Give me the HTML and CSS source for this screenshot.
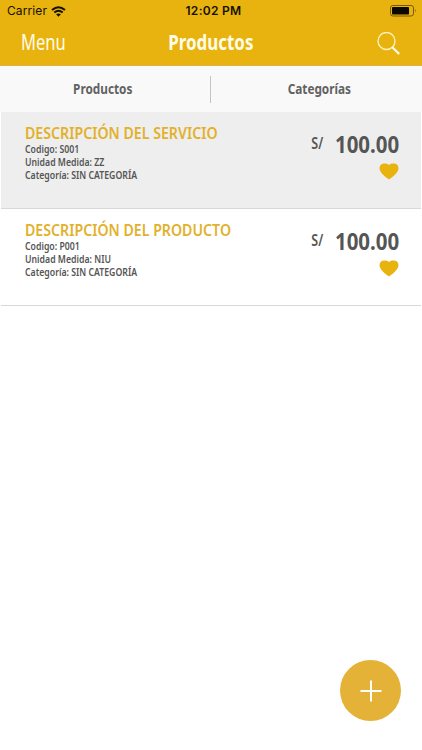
FILE: index.html
```html
<!DOCTYPE html>
<html lang="es">
<head>
<meta charset="utf-8">
<title>Productos</title>
<link rel="stylesheet" href="styles.css">
</head>
<body>
<header class="header">
  <div class="status">
    <div class="carrier"><span>Carrier</span>
      <svg width="15" height="11" viewBox="0 0 15 11" fill="none" stroke="#151100" stroke-width="2"><path d="M1 4.1Q7.5-1.6 14 4.1M3.3 6.6Q7.5 3 11.7 6.6"/><path d="M7.5 10.8 5.1 8.3Q7.5 6.5 9.9 8.3Z" fill="#151100" stroke="none"/></svg>
    </div>
    <div class="time">12:02 PM</div>
    <svg class="battery" width="27" height="12" viewBox="0 0 27 12"><rect x=".5" y=".5" width="23" height="10.5" rx="2.4" fill="none" stroke="#74590a"/><rect x="2" y="2" width="17" height="7.5" rx=".8" fill="#0b0800"/><path d="M25 4q1.5 1.7 0 3.5z" fill="#74590a"/></svg>
  </div>
  <div class="nav">
    <div class="menu"><span class="fit">Menu</span></div>
    <h1 class="title"><span class="fit">Productos</span></h1>
    <svg class="search" width="24" height="24" viewBox="0 0 24 24" fill="none" stroke="#fff3bd"><circle cx="9.5" cy="9" r="8.5" stroke-width="1.3"/><path d="M15 15 22.2 22" stroke="#fffbe9" stroke-width="2.2"/></svg>
  </div>
</header>
<nav class="tabs">
  <div class="tab"><span class="fit">Productos</span></div>
  <div class="tab tab-right"><span class="fit">Categorías</span></div>
</nav>
<main class="list">
  <article class="item selected">
    <div class="info">
      <h2 class="name"><span class="fit">DESCRIPCIÓN DEL SERVICIO</span></h2>
      <p><span class="fit">Codigo: S001</span></p>
      <p><span class="fit">Unidad Medida: ZZ</span></p>
      <p><span class="fit">Categoría: SIN CATEGORÍA</span></p>
    </div>
    <div class="side">
      <div class="price"><span class="currency fit">S/</span><span class="amount fit">100.00</span></div>
      <svg class="heart" width="20" height="17" viewBox="0 0 20 17"><path d="M10 16.5C7 14.5.5 9.8.5 5.3.5 2.6 2.5.6 5.2.6 7.3.6 9 .9 10 2.2 11 .9 12.7.6 14.8.6c2.7 0 4.7 2 4.7 4.7 0 4.5-6.5 9.2-9.5 11.2z" fill="#e9b30f"/></svg>
    </div>
  </article>
  <article class="item">
    <div class="info">
      <h2 class="name"><span class="fit">DESCRIPCIÓN DEL PRODUCTO</span></h2>
      <p><span class="fit">Codigo: P001</span></p>
      <p><span class="fit">Unidad Medida: NIU</span></p>
      <p><span class="fit">Categoría: SIN CATEGORÍA</span></p>
    </div>
    <div class="side">
      <div class="price"><span class="currency fit">S/</span><span class="amount fit">100.00</span></div>
      <svg class="heart" width="20" height="17" viewBox="0 0 20 17"><path d="M10 16.5C7 14.5.5 9.8.5 5.3.5 2.6 2.5.6 5.2.6 7.3.6 9 .9 10 2.2 11 .9 12.7.6 14.8.6c2.7 0 4.7 2 4.7 4.7 0 4.5-6.5 9.2-9.5 11.2z" fill="#e9b30f"/></svg>
    </div>
  </article>
</main>
<button class="add" aria-label="Agregar"><svg width="22" height="22" viewBox="0 0 22 22" stroke="#fff" stroke-width="2"><path d="M11 .5v21M.5 11h21"/></svg></button>
</body>
</html>
```
FILE: styles.css
```css
* { box-sizing: border-box; margin: 0; padding: 0; }
body { height: 750px; background: #fff; font-family: "Noto Sans", "Open Sans", sans-serif; color: #555; overflow: hidden; }
.fit { display: inline-block; white-space: nowrap; }
.header { height: 66px; background: #e9b30f; border-bottom: 1px solid #dfb339; }
.status { height: 22px; display: grid; grid-template-columns: 1fr auto 1fr; align-items: center; padding: 0 5px 0 7px; font: 500 12px/22px Inter, sans-serif; color: #151100; }
.carrier { display: flex; align-items: center; gap: 4px; font-weight: 400; letter-spacing: .1px; }
.time { font-weight: 600; letter-spacing: .3px; padding-left: 3px; }
.battery { justify-self: end; }
.nav { height: 43px; display: grid; grid-template-columns: 1fr auto 1fr; align-items: center; padding: 0 21px; color: #fffde8; line-height: 38px; }
.menu { font-size: 21px; font-weight: 400; }
.menu .fit { transform: scaleX(.785); transform-origin: left; }
.title { font-size: 21px; font-weight: 700; line-height: 36px; }
.title .fit { transform: scaleX(.805); }
.nav > div, .title { margin-top: -4px; }
.search { justify-self: end; }
.tabs { height: 46px; display: flex; align-items: center; background: #f9f9f9; }
.tab { flex: 1; height: 27px; line-height: 24px; text-align: center; font-size: 15px; font-weight: 700; color: #626262; padding-right: 6px; }
.tab .fit { transform: scaleX(.785); }
.tab-right { border-left: 1px solid #c4c4c4; margin-left: -1px; padding: 0 0 0 6px; }
.list { margin: 0 1px; }
.item { height: 97px; display: flex; justify-content: space-between; padding: 11px 22px 0 24px; border-bottom: 1px solid #d8d8db; }
.selected { background: #eee; }
.name { font-size: 16.4px; line-height: 20px; font-weight: 600; color: #e2b12b; }
.name .fit { transform: scaleX(.864); transform-origin: left; }
.info p { font-size: 10.4px; line-height: 13px; font-weight: 600; }
.info p .fit { transform: scaleX(.84); transform-origin: left; }
.side { display: flex; flex-direction: column; align-items: flex-end; }
.price { display: flex; align-items: center; gap: 9px; height: 40px; padding-top: 2px; }
.currency { font-size: 16px; font-weight: 600; transform: scaleX(.78); transform-origin: right; }
.amount { font-size: 23px; font-weight: 700; transform: scaleX(.89); transform-origin: right; }
.price .currency { margin: -2px -5px 0 0; }
.add { position: absolute; left: 340px; top: 660px; width: 61px; height: 61px; border: 0; border-radius: 50%; background: #e4b236; display: flex; align-items: center; justify-content: center; }
```
